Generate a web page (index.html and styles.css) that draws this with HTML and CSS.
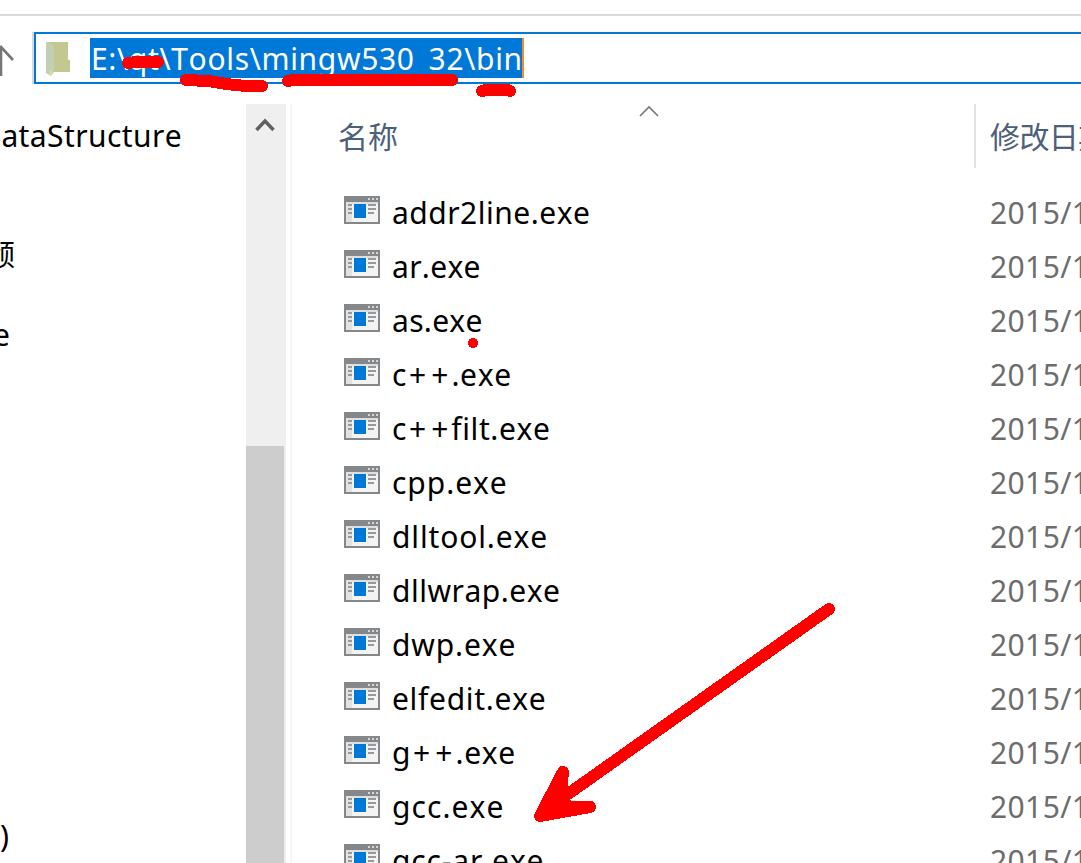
FILE: index.html
```html
<!DOCTYPE html>
<html lang="zh-CN">
<head>
<meta charset="utf-8">
<title>bin</title>
<link rel="stylesheet" href="styles.css">
</head>
<body>
<div class="window">
  <div class="toolbar">
    <svg class="up" width="14" height="32" viewBox="0 0 14 32"><path d="M1 2v29M-12 15L1 2l12 13" fill="none" stroke="#777" stroke-width="2.600"/></svg>
    <div class="address">
      <svg class="folder" width="26" height="36" viewBox="0 0 26 36"><path d="M1 1h22v18h2v12H1z" fill="#c3c891"/><path d="M1 1l8 4v26l-3 4-5-3z" fill="#c3cfb3"/><path d="M5 29l2 2v4l-2-2z" fill="#e6dfa5"/></svg>
      <span class="path">E:\qt\Tools\mingw530<span class="low">_</span>32\bin</span>
    </div>
  </div>
  <div class="main">
    <nav class="tree">
      <div class="node n1">DataStructure</div>
      <div class="node n2">频</div>
      <div class="node n3">e</div>
      <div class="node n4">)</div>
    </nav>
    <div class="scroll">
      <svg class="chev" width="20" height="16" viewBox="0 0 20 16"><path d="M1.500 13L10 4l8.500 9" fill="none" stroke="#606060" stroke-width="3.400"/></svg>
      <div class="thumb"></div>
    </div>
    <div class="files">
      <div class="head">
        <div class="name">名称
          <svg class="sort" width="20" height="12" viewBox="0 0 20 12"><path d="M1 11l9-9 9 9" fill="none" stroke="#777" stroke-width="1.600"/></svg>
        </div>
        <div class="date">修改日期</div>
      </div>
      <div class="list" id="list"></div>
    </div>
  </div>
  <svg class="marks" width="1081" height="863" viewBox="0 0 1081 863" shape-rendering="crispEdges">
    <g fill="none" stroke="#f00" stroke-linecap="round" stroke-linejoin="round" stroke-width="12">
      <path d="M128 63l8-1h22"/>
      <path d="M186 80l22 1 18 3 20 2 16 0"/>
      <path d="M288 81l6-1h158"/>
      <path d="M482 91l4-1h22l2 1"/>
      <path d="M829 609L568 794"/>
      <path d="M563 772L540 816l50-9h-23l-6-14z" fill="#f00"/>
    </g>
    <circle cx="473" cy="343" r="5" fill="#f00"/>
  </svg>
</div>
<svg width="0" height="0" class="defs">
  <symbol id="exe" viewBox="0 0 36 28">
    <path d="M0 0h36v28H0z" fill="#85888b"/>
    <path d="M2 6h32v20H2z" fill="#f3f3f3"/>
    <path d="M2 6h6v20H2z" fill="#e2e2e2"/><path d="M8 6h26v2H8z" fill="#dedede"/>
    <path d="M24 2h2v2h-2zM28 2h2v2h-2zM32 2h2v2h-2z" fill="#d5d5d5"/>
    <path d="M4 8h4v2H4zM4 12h4v2H4zM4 16h4v2H4zM24 8h8v2h-8zM24 12h8v2h-8zM24 16h6v2h-6z" fill="#999"/>
    <path d="M10 8h12v14H10z" fill="#0078d7"/>
  </symbol>
</svg>
<script src="app.js"></script>
</body>
</html>
```
FILE: styles.css
```css
body { margin: 0; overflow: hidden; background: #fff; }
.window {
  position: relative;
  width: 1081px;
  height: 863px;
  overflow: hidden;
  display: flex;
  flex-direction: column;
  font: 30px/54px "Noto Sans", "Noto Sans CJK SC", sans-serif;
  font-kerning: none;
  color: #000;
}
.toolbar {
  flex: none;
  box-sizing: border-box;
  height: 90px;
  margin-top: 14px;
  border-top: 2px solid #dadada;
  padding-top: 16px;
  display: flex;
}
.up { flex: none; margin: 13px 20px 0 0; }
.address {
  flex: 1;
  box-sizing: border-box;
  height: 52px;
  border: 2px solid #0078d7;
  border-right: 0;
  box-shadow: -2px 0 #d9d9d9;
  display: flex;
  padding: 4px 0 0 9px;
}
.folder { flex: none; margin: 3px 19px 0 0; }
.path {
  box-sizing: border-box;
  width: 434px;
  height: 40px;
  padding-left: 1px;
  line-height: 42px;
  letter-spacing: .66px;
  background: #0078d7;
  border-right: 2px solid #ff8728;
  color: #fff;
  white-space: nowrap;
  overflow: hidden;
}
.low { position: relative; top: 2px; }
.main { flex: 1; min-height: 0; display: flex; }
.tree { width: 246px; flex: none; overflow: hidden; }
.node { display: flex; justify-content: flex-end; height: 54px; white-space: nowrap; }
.n1 { width: 182px; margin-top: 5px; letter-spacing: .4px; }
.n2 { width: 15px; margin-top: 64px; }
.n3 { width: 10px; margin-top: 27px; }
.n4 { width: 9px; margin-top: 447px; }
.scroll { width: 40px; flex: none; background: #efefef; display: flex; flex-direction: column; }
.chev { flex: none; margin: 13px 0 0 9px; }
.thumb { flex: 1; margin: 313px 2px 0 0; background: #cdcdcd; }
.files { flex: 1; margin-left: 4px; border-left: 2px solid #f5f5f5; min-width: 0; }
.head { display: flex; height: 64px; line-height: 66px; color: #4c607a; }
.name { box-sizing: border-box; width: 684px; flex: none; padding-left: 46px; border-right: 2px solid #e2e2e2; display: flex; }
.sort { margin: 1px 0 0 241px; }
.date { flex: 1; padding-left: 14px; letter-spacing: -.6px; overflow: hidden; white-space: nowrap; }
.list { padding-top: 18px; }
.row { display: flex; height: 54px; }
.icon { flex: none; width: 36px; height: 28px; margin: 10px 12px 0 52px; }
.label { width: 598px; flex: none; }
.plus { letter-spacing: 5px; padding-left: 2px; margin-right: -2px; }
.when { color: #6d6d6d; white-space: nowrap; letter-spacing: .4px; }
.marks { position: absolute; left: 0; top: 0; }
.defs { display: none; }
```
FILE: app.js
```javascript
// File name and its letter tracking in pixels.
const files = [["addr2line", 0.5], ["ar", 0.3], ["as", 0.3], ["c++", 0.65], ["c++filt", 0.6], ["cpp", 0.95], ["dlltool", 0.85], ["dllwrap", 0.5], ["dwp", 0.85], ["elfedit", 0.7], ["g++", 0.65], ["gcc", 1.05], ["gcc-ar", 0.85]];
document.getElementById("list").innerHTML = files.map(([name, tracking]) => `
  <div class="row">
    <svg class="icon" shape-rendering="crispEdges"><use href="#exe"/></svg>
    <span class="label" style="letter-spacing:${tracking}px">${name.replace("++", '<span class="plus">++</span>')}.exe</span>
    <span class="when">2015/12/29</span>
  </div>`).join("");
```
